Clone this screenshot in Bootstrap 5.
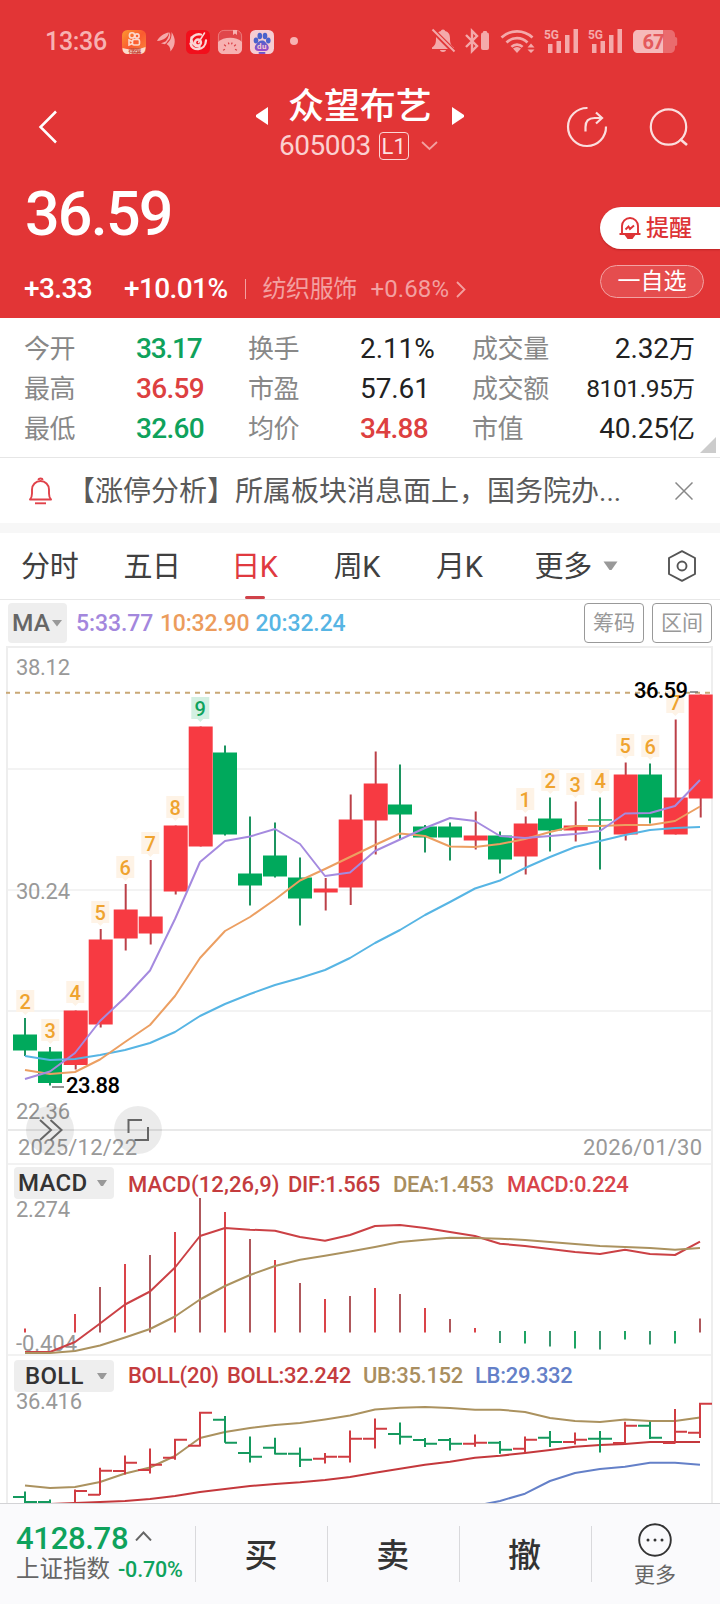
<!DOCTYPE html>
<html lang="zh-CN">
<head>
<meta charset="utf-8">
<meta name="viewport" content="width=device-width, initial-scale=1">
<title>众望布艺 605003</title>
<link rel="stylesheet" href="https://cdn.jsdelivr.net/npm/bootstrap@5.3.0/dist/css/bootstrap.min.css">
<style>
  :root { --up:#e23536; --down:#0fa25c; }
  body { font-family: Roboto, "Noto Sans CJK SC", sans-serif; color:#333; background:#fff; width:720px; line-height:1; overflow-x:hidden; }
  svg { display:block; flex:none; }
  svg.inline { overflow:visible; }
  .hero { background:var(--up); height:318px; }
  .statusbar { height:82px; padding:26px 40px 0 45px; }
  .clock { font-size:25px; font-weight:500; width:73px; line-height:31px; color:#f7b2b2; letter-spacing:-.3px; }
  .topbar { height:86px; padding:4px 30px 0 37px; }
  .stock-name { font-size:36px; font-weight:500; line-height:42px; height:40px; letter-spacing:-.1px; }
  .stock-code { font-size:28px; line-height:30px; letter-spacing:-.45px; color:#fbd0d0; }
  .code-row { padding-left:106px; margin-top:5px; }
  .lv { width:30px; height:28px; border:1px solid #fbd5d5; border-radius:4px; font-size:22px; line-height:27px; color:#fde3e3; letter-spacing:0; }
  .price-box { padding-left:25px; height:150px; }
  .price { font-size:61px; font-weight:500; line-height:64px; letter-spacing:-1.8px; margin-top:14px; }
  .chg { font-size:28px; font-weight:500; letter-spacing:-.6px; line-height:30px; margin-top:28px; margin-left:-1px; }
  .sector { font-size:24px; font-weight:400; color:#f3a0a0; letter-spacing:.1px; }
  .remind { height:42px; width:120px; margin-top:39px; background:#fff; border-radius:21px 0 0 21px; color:#dd3336; font-size:23px; font-weight:500; padding-left:18px; box-shadow:0 1px 2px rgba(120,0,0,.35); }
  .fav { height:33px; width:104px; margin-top:16px; border:1px solid #f2a3a3; background:rgba(255,255,255,.12); border-radius:17px; font-size:23px; line-height:32px; }
  .quotes { height:140px; padding:11px 25px 0 24px; border-bottom:1px solid #e6e6e6; position:relative;}
  .qrow { display:grid; grid-template-columns:112px 112px 112px 112px 1fr auto; height:40px; align-items:center; font-size:28px; letter-spacing:-.7px; width:671px; }
  .qrow span { color:#888; font-size:26px; letter-spacing:-.4px; }
  .qrow b { font-weight:500; }
  .qrow b.n { font-weight:400; color:#222; letter-spacing:-.1px; }
  .qrow i { font-style:normal; font-size:26px; letter-spacing:0; }
  .t-up { color:#dd4040 !important; } .t-down { color:var(--down) !important; }
  .fold { position:absolute; right:4px; bottom:4px; }
  .news { height:65px; padding:0 27px 0 29px; font-size:28px; color:#5a5a5a; }
  .gap-bar { height:10px; background:#f7f7f7; }
  .ktabs { height:67px; border-bottom:1px solid #e8e8e8; font-size:29px; color:#404040; }
  .ktab { width:102.4px; height:66px; display:flex; align-items:center; justify-content:center; position:relative; letter-spacing:-.4px; padding-top:3px; padding-right:3px; }
  .ktab.active { color:#e0393f; }
  .ktab.active::after { content:""; position:absolute; bottom:0; left:40px; width:20px; height:3px; border-radius:2px; background:#d0424a; }
  .ma-row { height:46px; padding:3px 8px 3px 8px; font-size:23px; font-weight:500; }
  .ma-sel { width:59px; height:40px; border-radius:4px; background:#eee; color:#666; font-size:24.5px; padding-left:4px; }
  .tool { width:60px; height:40px; border:1px solid #999; border-radius:4px; color:#999; font-size:21px; font-weight:400; }
  .plot { margin-left:6px; border:2px solid #eee; border-bottom:0; height:857px; width:707px; overflow:clip; overflow-clip-margin:4px; }
  .plot svg { overflow:visible; }
  .ind-head { height:34px; padding:4px 0 0 6px; font-size:22px; letter-spacing:-.3px; border-top:2px solid #f2f2f2; font-weight:500; }
  .ind-head > span { padding-top:5px; }
  .ind-sel { width:100px; height:32px; background:#eee; border-radius:4px; font-size:24px; padding:0 7px 0 4px; color:#333; letter-spacing:.3px; margin-right:14px; }
  .foot { position:relative; z-index:2; height:101px; border-top:1px solid #d3d3d6; background:#fafafc; }
  .foot .cell { width:132px; height:56px; margin-top:22px; border-left:1px solid #d9d9dc; font-size:33px; font-weight:500; padding-top:2px; padding-right:1px; }
  .idx { width:195px; padding:19px 0 0 16px; }
</style>
</head>
<body>
<header class="hero text-white">
  <div class="statusbar d-flex align-items-start">
    <div class="clock">13:36</div>
    <svg width="182" height="32" viewBox="118 26 182 32">
      <defs>
        <linearGradient id="ks" x1="0" y1="0" x2="1" y2="1"><stop offset="0" stop-color="#fb9a2f"/><stop offset=".5" stop-color="#fb5a30"/><stop offset="1" stop-color="#f98a3c"/></linearGradient>
        <linearGradient id="bd" x1="0" y1="0" x2="0" y2="1"><stop offset="0" stop-color="#4a62cc"/><stop offset="1" stop-color="#a04cc8"/></linearGradient>
      </defs>
      <rect x="122" y="30" width="24" height="24" rx="5.5" fill="url(#ks)"/>
      <path d="M122.5 48c6 2 16 2 23-1-.3 5-2 7-6 7h-11c-4 0-6-2-6-6z" fill="#fbdcd0"/>
      <g fill="none" stroke="#fcd9cc" stroke-width="1.6"><circle cx="132" cy="35.4" r="2.6"/><circle cx="137" cy="36" r="2.1"/><rect x="132.5" y="39.5" width="7" height="5.5" rx="1.5"/><path d="M132.500 41.500l-3.500-1.500v5l3.500-1.500"/></g>
      <text x="128.500" y="53.300" font-size="5.500" font-weight="700" fill="#c84a3a" textLength="13">得奖喜</text>
      <path d="M157 41c2.500-4.500 7-8 12-8.500-1 4.500-5 8-12 8.500zM163.500 43.500c3.500-3 5.500-6.500 6-11.500 2.500 5-.5 9.500-6 11.500zM170.500 51.500c0-4-1.500-6-4-7.500 3.500-2.500 5.500-6.500 5-12 4.500 6.500 4.500 13-1 19.500zM161 43.200c3-.5 6-2.500 8-5-1.500 3.500-2.500 5-4.500 6z" fill="#f5a9a9"/>
      <rect x="186" y="30" width="24" height="24" rx="5.500" fill="#f20f1c"/>
      <g fill="none" stroke="#fbd5d5" stroke-width="2.300" stroke-linecap="round"><path d="M201 34.500a8 7 0 0 0-10 7M190.500 43.500c1 8 15 8 15.500-3M191.500 37.500c-1 4 3 10 8 9"/><circle cx="198" cy="42.500" r="3"/><path d="M198.500 42.500l6-9.500" stroke-width="1.500"/></g>
      <rect x="218.400" y="30.400" width="23.200" height="23.200" rx="5.500" fill="#e0464a" stroke="#ef8a8a" stroke-width=".8"/>
      <path d="M218 42c5-5 18-6 24 0v6c0 4-2 6-6 6h-12c-4 0-6-2-6-6z" fill="#f7b1b1"/><path d="M233 30h4v5l-2-1.500-2 1.500z" fill="#f7b1b1"/>
      <g stroke="#d9434a" stroke-width="1.300" stroke-linecap="round"><path d="M224.500 45l1 .8M228.500 43l.3.800M232 43l-.3.800M235.500 45l-1 .8M223.500 50l1-.5M236.500 50l-1-.5"/></g>
      <rect x="250" y="30" width="24" height="24" rx="5.500" fill="#f6cdd3"/>
      <g fill="url(#bd)"><ellipse cx="256" cy="40.500" rx="2.300" ry="3" fill="#4a62cc"/><ellipse cx="259.800" cy="36" rx="2.300" ry="3.200" fill="#4a62cc"/><ellipse cx="265" cy="36" rx="2.300" ry="3.200" fill="#4a62cc"/><ellipse cx="268.300" cy="40.500" rx="2.300" ry="3" fill="#4a62cc"/><path d="M262 40.500c3 0 3.500 2 5 3.500 3 3 2 7-1.500 7-2 0-5 .2-7 0-4 0-5-4-2-7 1.500-1.500 2.500-3.500 5.500-3.500z"/><rect x="258.500" y="52" width="7" height="2" rx="1"/></g>
      <text x="257" y="49" font-size="8" font-weight="700" fill="#f6cdd3" textLength="9.500">du</text>
      <circle cx="294" cy="41" r="4" fill="#f7b2b2"/>
    </svg>
    <svg class="ms-auto" width="252" height="32" viewBox="428 26 252 32">
      <g fill="#f4a9aa">
        <path d="M443 29.500c-1.500 0-2 1-2 1.500-4 1-5 4-5 7.500 0 5-1 7-4 9v1.500h22v-1.500c-3-2-4-4-4-9 0-3.500-1-6.500-5-7.500 0-.5-.5-1.500-2-1.500zM440 50h6c0 1.300-1.500 2-3 2s-3-.7-3-2z"/>
        <path d="M431 28.500l24 24" stroke="#e23536" stroke-width="5"/><path d="M432.500 29.500l22 22" stroke="#f4a9aa" stroke-width="2"/>
        <rect x="481" y="32.500" width="8" height="17.500" rx="2"/><rect x="483" y="31" width="4" height="3" rx="1"/>
        <path d="M466 35l11 11-5 5V31l5 5-11 11" fill="none" stroke="#f4a9aa" stroke-width="2.400"/>
        <g fill="none" stroke="#f4a9aa" stroke-width="2.700"><path d="M501.500 37.500a22.500 22.500 0 0 1 31 0M506.500 42.500a15 15 0 0 1 21 0"/></g>
        <path d="M510.500 46a9 9 0 0 1 13 0l-1.800 1.800a7 7 0 0 0-9.400 0z"/><path d="M513 48.500a6 6 0 0 1 8 0l-4 4.500z"/>
        <path d="M527.500 47.500l3.500-4 3.500 4zM527.500 49.500h7l-3.500 3.500z"/>
        <path d="M548 44h4.500v9H548zM556.500 41h4.500v12h-4.500zM565 35h4.500v18H565zM573.500 29h4.500v24h-4.500zM592 44h4.500v9H592zM600.500 41h4.500v12h-4.500zM609 35h4.500v18H609zM617.500 29h4.500v24h-4.500z"/>
        <text x="544" y="38.500" font-size="13.500" font-weight="700" textLength="15" lengthAdjust="spacingAndGlyphs">5G</text>
        <text x="588" y="38.500" font-size="13.500" font-weight="700" textLength="15" lengthAdjust="spacingAndGlyphs">5G</text>
      </g>
      <path d="M663 30h7c3 0 5 2 5 5v2c2 0 2.200 1 2.200 2v5c0 1-.2 2-2.200 2v2c0 3-2 5-5 5h-7z" fill="#ea6b6d"/>
      <path d="M638 30h25v23h-25c-3 0-5-2-5-5V35c0-3 2-5 5-5z" fill="#f6b9ba"/>
      <text x="642.500" y="48.500" font-size="20" font-weight="700" fill="#e4595c" textLength="22">67</text>
    </svg>
  </div>

  <nav class="topbar d-flex align-items-start">
    <svg class="inline mt-4" width="22" height="34" viewBox="37 110 22 34"><path d="M56 111.500L40.500 127 56 142.500" fill="none" stroke="#fff" stroke-width="2.500"/></svg>
    <div class="flex-grow-1 text-center" style="padding-left:114px">
      <div class="d-flex align-items-center" style="padding-left:83px">
        <svg width="12" height="18" viewBox="0 0 12 18" style="margin-top:19px"><path d="M12 0v18L0 10V8z" fill="#fff"/></svg>
        <div class="stock-name ms-3 me-3 ps-1">众望布艺</div>
        <svg width="12" height="18" viewBox="0 0 12 18" class="ms-1" style="margin-top:19px"><path d="M0 0v18l12-8V8z" fill="#fff"/></svg>
      </div>
      <div class="code-row d-flex align-items-center">
        <div class="stock-code">605003</div>
        <div class="lv ms-2 text-center">L1</div>
        <svg style="margin-left:12px" width="17" height="10" viewBox="0 0 17 10"><path d="M1 1l7.500 7L16 1" fill="none" stroke="#f3a0a0" stroke-width="1.800"/></svg>
      </div>
    </div>
    <svg style="margin-top:20px" width="124" height="42" viewBox="566 106 124 42" fill="none" stroke="#fbdede" stroke-width="2.200">
      <path d="M587.500 108A19 19 0 1 0 606 126.500"/><path d="M585.500 131.500V127q0-9 9-9h6.500M596 112.500l6 5.500-6 5.500"/>
      <circle cx="668.500" cy="127" r="17.700"/><path d="M680 139l7 6" stroke-width="2.600"/>
    </svg>
  </nav>

  <div class="d-flex">
    <div class="price-box flex-grow-1">
      <div class="price">36.59</div>
      <div class="chg d-flex align-items-center">
        <span style="width:100px">+3.33</span><span style="width:120.500px">+10.01%</span>
        <span style="width:1px;height:20px;background:#f3a0a0"></span>
        <span class="sector" style="margin-left:17px;width:108px;letter-spacing:-.4px">纺织服饰</span><span class="sector">+0.68%</span>
        <svg style="margin-left:7px" width="10" height="17" viewBox="0 0 10 17"><path d="M1 1l7.500 7.500L1 16" fill="none" stroke="#f3a0a0" stroke-width="1.800"/></svg>
      </div>
    </div>
    <div>
      <div class="remind d-flex align-items-center">
        <svg class="me-1" width="24" height="24" viewBox="0 0 24 24" fill="none" stroke="#dd3336" stroke-width="1.900"><path d="M4 17.500v-7.500a8 8 0 0 1 16 0v7.500M1.500 18h21M8.500 20h7l-1.500 2h-4zM7.500 13.500l3-3 1.500 2.500 4-3.500"/></svg>提醒
      </div>
      <div class="fav text-center">一自选</div>
    </div>
  </div>
</header>

<section class="quotes">
  <div class="qrow"><span>今开</span><b class="t-down" style="letter-spacing:-1.200px">33.17</b><span>换手</span><b class="n">2.11%</b><span>成交量</span><b class="n">2.32<i>万</i></b></div>
  <div class="qrow"><span>最高</span><b class="t-up">36.59</b><span>市盈</span><b class="n">57.61</b><span>成交额</span><b class="n" style="font-size:24.500px;letter-spacing:-.4px">8101.95<i style="font-size:22.500px">万</i></b></div>
  <div class="qrow"><span>最低</span><b class="t-down">32.60</b><span>均价</span><b class="t-up">34.88</b><span>市值</span><b class="n">40.25<i>亿</i></b></div>
  <svg class="fold" width="16" height="16"><path d="M16 0v16H0z" fill="#ccc"/></svg>
</section>

<section class="news d-flex align-items-center">
  <svg width="23" height="28" viewBox="0 0 23 28" fill="none" stroke="#e0424a" stroke-width="1.900" stroke-linejoin="round"><path d="M1 22.500c2-2 2-4 2-6v-4a8.500 8.500 0 0 1 17 0v4c0 2 0 4 2 6zM9.500 3c0-2 4-2 4 0"/><path d="M6 26.300h11"/></svg>
  <div class="text-nowrap" style="margin-left:15px;padding-top:3px">【涨停分析】所属板块消息面上，国务院办...</div>
  <svg class="ms-auto" width="18" height="18"><path d="M.5.500l17 17M17.500.500l-17 17" stroke="#888" stroke-width="1.500"/></svg>
</section>
<div class="gap-bar"></div>

<nav class="ktabs d-flex align-items-center">
  <div class="ktab">分时</div><div class="ktab">五日</div><div class="ktab active">日K</div><div class="ktab">周K</div><div class="ktab">月K</div>
  <div class="ktab pe-0">更多</div>
  <svg style="margin-left:-11px" width="15" height="10"><path d="M.5.500h14l-6 8.500h-2z" fill="#999"/></svg>
  <svg class="ms-auto me-4" width="28" height="32" viewBox="0 0 28 32" fill="none" stroke="#555" stroke-width="1.900" stroke-linejoin="round"><path d="M14 1.200L27 8v16l-13 6.800L1 24V8z"/><circle cx="14" cy="16" r="4.500"/></svg>
</nav>

<div class="ma-row d-flex align-items-center">
  <div class="ma-sel d-flex align-items-center">MA<svg style="margin-left:2px" width="10" height="7"><path d="M0 0h10L5 6.500z" fill="#999"/></svg></div>
  <span style="margin-left:9px;width:84px;color:#a387dd;letter-spacing:-.1px">5:33.77</span><span style="width:95.500px;color:#ec9c5c;letter-spacing:-.2px">10:32.90</span><span style="color:#57b5e4;letter-spacing:-.1px">20:32.24</span>
  <div class="tool ms-auto d-flex align-items-center justify-content-center">筹码</div>
  <div class="tool ms-2 d-flex align-items-center justify-content-center">区间</div>
</div>

<main class="plot">
  <svg id="kline" width="703" height="515" viewBox="8 648 703 515"></svg>
  <div class="ind-head d-flex align-items-start">
    <div class="ind-sel d-flex align-items-center justify-content-between" style="margin-top:-2px">MACD<svg width="10" height="7"><path d="M0 0h10L6 6H4z" fill="#999"/></svg></div>
    <span style="width:160px;color:#c43c3e;letter-spacing:.1px">MACD(12,26,9)</span><span style="width:105px;color:#c43c3e">DIF:1.565</span><span style="width:114px;color:#a98e60">DEA:1.453</span><span style="color:#d8434a">MACD:0.224</span>
  </div>
  <svg id="macd" width="703" height="157" viewBox="8 1197 703 157"></svg>
  <div class="ind-head d-flex align-items-start">
    <div class="ind-sel d-flex align-items-center justify-content-between" style="padding-left:11px">BOLL<svg width="10" height="7"><path d="M0 0h10L6 6H4z" fill="#999"/></svg></div>
    <span style="width:99px;color:#c43c3e">BOLL(20)</span><span style="width:136px;color:#c43c3e">BOLL:32.242</span><span style="width:112px;color:#a98e60">UB:35.152</span><span style="color:#6480c8">LB:29.332</span>
  </div>
  <svg id="boll" width="703" height="115" viewBox="8 1388 703 115"></svg>
</main>

<footer class="foot d-flex">
  <div class="idx">
    <div class="d-flex align-items-start t-down" style="font-size:31px;font-weight:500;line-height:31px"><span style="letter-spacing:-.3px">4128.78</span><svg style="margin:8px 0 0 7px" width="17" height="10"><path d="M1 9.500l7.500-8 7.500 8" fill="none" stroke="#666" stroke-width="1.900"/></svg></div>
    <div class="d-flex align-items-center text-nowrap" style="font-size:23.500px;color:#666;line-height:31px"><span style="width:102px">上证指数</span><span class="t-down" style="font-size:21.500px;letter-spacing:-.2px;font-weight:500">-0.70%</span></div>
  </div>
  <div class="cell d-flex align-items-center justify-content-center">买</div>
  <div class="cell d-flex align-items-center justify-content-center" style="width:131.500px">卖</div>
  <div class="cell d-flex align-items-center justify-content-center">撤</div>
  <div class="cell text-center" style="width:129px"><svg class="mx-auto" style="margin-top:-6px" width="36" height="36"><circle cx="18" cy="18" r="15.800" fill="none" stroke="#333" stroke-width="1.900"/><g fill="#333"><circle cx="11" cy="18" r="1.500"/><circle cx="18" cy="18" r="1.500"/><circle cx="25" cy="18" r="1.500"/></g></svg><div style="font-size:21px;font-weight:400;color:#666;margin-top:7px">更多</div></div>
</footer>

<script src="https://cdn.jsdelivr.net/npm/bootstrap@5.3.0/dist/js/bootstrap.bundle.min.js"></script>
<script>
const RED = '#f73a42', GREEN = '#00a95c';
const X = i => 25 + 25 * i;
const line = (x1, y1, x2, y2, c, w, extra = '') => `<path d="M${x1} ${y1}L${x2} ${y2}" stroke="${c}" stroke-width="${w}" fill="none" ${extra}/>`;
const curve = (ys, c, from = 0, w = 2) => `<polyline points="${ys.map((y, i) => X(i + from) + ',' + y).join(' ')}" fill="none" stroke="${c}" stroke-width="${w}" stroke-linejoin="round"/>`;
const label = (x, y, t, len, c = '#999', w = 400) => `<text x="${x}" y="${y}" font-size="22" font-weight="${w}" fill="${c}" textLength="${len}">${t}</text>`;

// direction, high, body top, body bottom, low
const candles = [
 ['g',1018,1034.5,1050.5,1056],['g',1047,1051.5,1083,1085.5],['r',1010.5,1010.5,1065,1069.5],['r',929,939.5,1024.5,1027.5],
 ['r',884,909.5,938.5,950.5],['r',860,916.5,933.5,944.5],['r',825.5,825.5,891.5,894.5],['r',726.5,726.5,846.5,846.5],
 ['g',745.5,752.5,834.5,835.5],['g',816.5,873.5,885.5,905.5],['g',822.5,855.5,876.5,877.5],['g',857.5,877.5,898.5,925.5],
 ['r',878,888.5,892.5,910.5],['r',794.5,819.5,887.5,905],['r',751.5,783.5,820.5,854.5],['g',764.5,804.5,814.5,840],
 ['g',825,826.5,837.5,852.5],['g',822.5,826.5,837.5,860.5],['r',811.5,835.5,840.5,849.5],['g',831.5,835.5,859.5,873.5],
 ['r',816.5,823.5,856.5,874.5],['g',797.5,818.5,830.5,851.5],['r',801.5,825.5,830.5,841.5],['g',797.5,819.3,820.6,869.5],
 ['r',762.5,774.5,834.5,840.5],['g',763.5,774.5,817.5,823.5],['r',719.5,797.5,834.5,834.5],['r',694.5,694.5,798.5,817.5]];
const tags = [[0,990,2],[1,1019,3],[2,981,4],[3,901,5],[4,856,6],[5,832,7],[6,796,8],[7,697,9],[20,788,1],[21,769,2],[22,773,3],[23,769,4],[24,734,5],[25,735,6],[26,691,7]];

let k = [769, 890, 1011].map(y => line(8, y, 711, y, '#f3f3f3', 2)).join('') + line(8, 1130, 711, 1130, '#e9e9e9', 2);
k += label(16, 675, '38.12', 54) + label(16, 899, '30.24', 54) + label(16, 1119, '22.36', 54);
k += label(18, 1155, '2025/12/22', 119) + label(583, 1155, '2026/01/30', 119);
k += line(6, 692.8, 10, 692.8, '#c9a876', 2) + line(15, 692.8, 712, 692.8, '#c9a876', 2, 'stroke-dasharray="5 5"');
candles.forEach(([d, h, t, b, l], i) => {
  const c = d === 'r' ? RED : GREEN, wick = d === 'r' ? '#bb4048' : '#1c9460', x = X(i) + (d === 'r' ? .7 : 0);
  k += line(x, h, x, l, wick, 2) + `<rect x="${x - 12}" y="${t}" width="24" height="${b - t}" fill="${c}"/>`;
});
tags.forEach(([i, y, n]) => {
  const g = n === 9, x = X(i) + .3;
  k += `<path d="M${x-9} ${y}h18v22h-6l-3 3-3-3h-6z" fill="${g ? '#d3f0e2' : '#fef3e6'}"/><text x="${x}" y="${y + 19}" font-size="20" font-weight="500" text-anchor="middle" fill="${g ? '#0fa25c' : '#efa32f'}">${n}</text>`;
});
k += curve([1056,1060,1059,1055,1050,1043,1032,1016,1004,994,985,978,970,958,943,930,915,902,888.5,880.5,868,857,847,841,835,830,828,827], '#57b5e4');
k += curve([1070,1074,1072,1059.5,1042,1025,996,958,931,917,899.5,880.5,869,857,845,833.5,836,846.5,847,844,839,832,826,826,825,825,821,806.5], '#ec9f62');
k += curve([1079,1071.5,1053,1021,997.5,970.5,919,862,841,836.5,829,844,876,872.5,851,839.5,828,818,821,836,838,836,834,831,813.5,813,806,780], '#a58adf');
k += line(52, 1087, 64, 1087, '#888', 1.8) + label(66, 1093, '23.88', 54, '#000', 500);
k += line(690, 692, 698, 692, '#777', 1.5) + label(634, 697.500, '36.59', 54, '#000', 500);
k += '<g fill="rgba(0,0,0,.08)"><circle cx="50" cy="1130" r="24"/><circle cx="138" cy="1130" r="24"/></g>';
k += '<path d="M40 1120l11 10-11 10M50.500 1120l11 10-11 10M128.500 1133v-13H142M148 1127v13h-13.500" fill="none" stroke="#666" stroke-width="2"/>';
document.getElementById('kline').innerHTML = k;

// histogram bar ends, null where the bar has no height
const hist = [1328.5,null,1314,1287,1264,1255,1232,1198,1212,1239,1260,1283,1299,1296,1288,1294,1308,1319,1328,1343,1343.5,1346.5,1348.5,1349.5,1339.5,1344.5,1343.5,1318.5];
let m = hist.map((y, i) => y === null ? '' : y > 1333 ? line(X(i), 1331, X(i), y, i % 2 ? '#2d9168' : '#12a05c', 1.9) : line(X(i), y, X(i), 1332.5, i % 2 ? '#ab5054' : '#d93a40', 1.9)).join('');
m += label(16, 1217, '2.274', 54) + label(16, 1351, '-0.404', 61);
m += curve([1352,1352,1342,1323.5,1304.5,1291.5,1267.5,1236,1228,1229.7,1230.7,1237,1240.7,1235,1226,1225,1228,1232,1236,1243.7,1246,1249,1252,1254,1249.7,1254,1255,1241.7], '#cb4145');
m += curve([1353,1353,1351,1345.5,1337.5,1329,1316.5,1299.5,1286,1275,1266,1259.7,1255.7,1251.5,1247,1242,1239.7,1237.7,1238,1238.7,1240,1242,1244,1246,1247,1248,1249.7,1248], '#ab925f');
document.getElementById('macd').innerHTML = m;

// direction, open, high, low, close
const bars = [['g',1497,1492.5,1503,1502],['g',1502,1500.5,1510,1510],['r',1510,1490.5,1510,1491],['r',1494.7,1468.7,1495,1470.7],['r',1471,1456.5,1474.5,1462.7],['r',1470,1449.5,1473.5,1464.7],['r',1457.7,1439.7,1459.7,1439.7],['r',1445.7,1412.7,1446.5,1412.7],['g',1419.7,1417,1442.7,1442.7],['g',1453,1437.5,1462.5,1456.7],['g',1447.7,1438.7,1454.5,1453.7],['g',1453.7,1448.5,1467,1459.7],['r',1458.7,1454,1463.5,1456.7],['r',1456.7,1431.5,1462.5,1438.7],['r',1438.7,1419.5,1448.5,1428.7],['g',1434,1423.5,1444.5,1436.7],['g',1440,1439,1447,1443.7],['g',1440,1439,1450.5,1443.7],['r',1443.7,1435.5,1446.7,1442.7],['g',1442.7,1442,1453.7,1449.7],['r',1448.7,1437.5,1452.7,1439.7],['g',1437.7,1432,1447,1442],['r',1442,1433.5,1444.5,1439.7],['g',1438.7,1432,1452.5,1438.7],['r',1443,1422.7,1444,1425.7],['g',1425.7,1422.7,1439,1437.7],['r',1443,1410,1443.5,1431.7],['r',1432.7,1403.7,1438,1403.7]];
let b = label(16, 1408.5, '36.416', 66);
b += curve([1485.5,1488,1487,1482,1473.5,1467.5,1456,1438,1432,1428,1425,1423,1419.5,1415.5,1409.5,1407.7,1407,1408,1409.7,1409.7,1412,1418,1421,1422,1419.5,1421,1421,1417.5], '#ab925f');
b += curve([1504,1503,1502,1501,1499,1496,1492,1489,1486,1484,1482.3,1480,1477,1472.7,1468.7,1464.7,1461.7,1457.7,1455.7,1453,1450,1446.7,1445,1444,1442,1442,1442], '#c4383c', 1);
b += curve([1506,1501,1493.7,1481,1473,1469,1466.7,1462.7,1462.7,1464.7], '#6480c8', 18);
bars.forEach(([d, o, h, l, c], i) => {
  const x = X(i);
  b += `<path d="M${x - 12} ${o}H${x}M${x} ${h - .9}V${l}M${x} ${c}h12" fill="none" stroke="${d === 'r' ? '#d03c42' : '#14995e'}" stroke-width="2"/>`;
});
document.getElementById('boll').innerHTML = b;
</script>
</body>
</html>
